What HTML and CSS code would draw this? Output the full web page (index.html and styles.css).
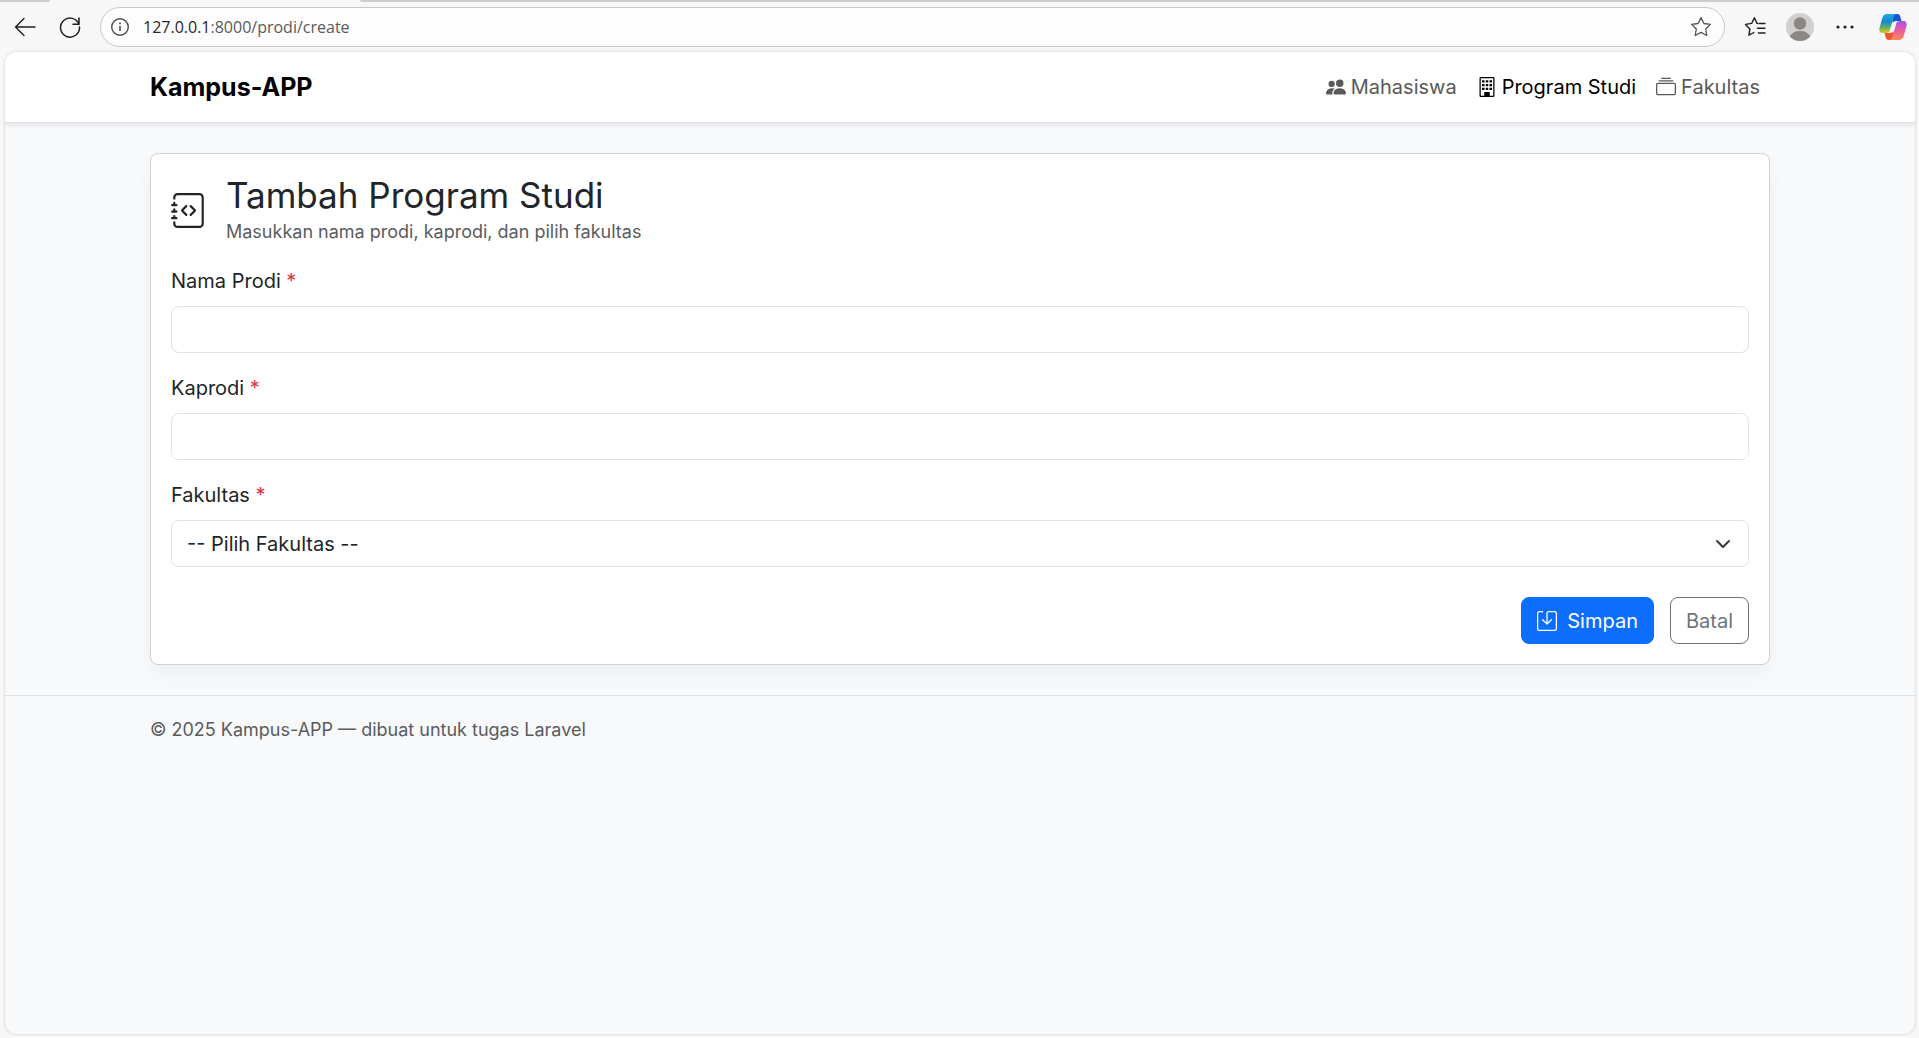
FILE: index.html
```html
<!DOCTYPE html>
<html lang="id">
<head>
<meta charset="utf-8">
<meta name="viewport" content="width=device-width, initial-scale=1">
<title>Tambah Program Studi</title>
<link rel="stylesheet" href="styles.css">
</head>
<body>
<header class="browser">
  <div class="tab-edge"><span class="tab-edge-left"></span><span class="tab-edge-right"></span></div>
  <div class="toolbar">
    <button class="tool" type="button" aria-label="Back">
      <svg width="24" height="24" viewBox="0 0 24 24" fill="none" stroke="#1f1f1f" stroke-width="1.4" stroke-linecap="round" stroke-linejoin="round"><path d="M22 12H2.500M11 3.500 2.500 12l8.500 8.500"/></svg>
    </button>
    <button class="tool" type="button" aria-label="Refresh">
      <svg width="24" height="24" viewBox="0 0 24 24" fill="none" stroke="#1f1f1f" stroke-width="1.500" stroke-linecap="round" stroke-linejoin="round"><path d="M21 9.500A9.500 9.500 0 1 0 21.500 12M21 3v6.200h-6"/></svg>
    </button>
    <div class="address">
      <svg width="20" height="20" viewBox="0 0 20 20" fill="none" stroke="#4a4a4a" stroke-width="1.400"><circle cx="10" cy="10" r="8.300"/><path d="M10 9v5" stroke-width="1.600"/><circle cx="10" cy="6.400" r="1" fill="#4a4a4a" stroke="none"/></svg>
      <span class="url"><span class="url-host">127.0.0.1</span>:8000/prodi/create</span>
      <svg class="star" width="22" height="22" viewBox="0 0 22 22" fill="none" stroke="#555" stroke-width="1.300" stroke-linejoin="round"><path d="M11 1.600l2.900 5.900 6.500.9-4.700 4.600 1.100 6.500-5.800-3.100-5.800 3.100 1.100-6.500L1.600 8.400l6.500-.9z"/></svg>
    </div>
    <button class="tool" type="button" aria-label="Favorites">
      <svg width="22" height="22" viewBox="0 0 22 22" fill="none" stroke="#1f1f1f" stroke-width="1.400" stroke-linecap="round" stroke-linejoin="round"><path d="M14 7.500l-1-.1L10.400 1.800 7.700 7.400l-6.200 1 4.400 4.500-1 6.300 5-2.700M15.500 7.500H21M13.500 12.200H21M14.500 17H21"/></svg>
    </button>
    <button class="tool" type="button" aria-label="Profile">
      <svg width="28" height="28" viewBox="0 0 28 28"><circle cx="14" cy="14" r="14" fill="#d2d0ce"/><circle cx="14" cy="10.500" r="6.200" fill="#8a8785"/><path d="M4 23.700C5.500 19.800 9 18 14 18s8.500 1.800 10 5.700A14 14 0 0 1 14 28 14 14 0 0 1 4 23.700z" fill="#8a8785"/></svg>
    </button>
    <button class="tool" type="button" aria-label="Settings and more">
      <svg width="18" height="6" viewBox="0 0 18 6" fill="#1f1f1f"><circle cx="2" cy="3" r="1.600"/><circle cx="9" cy="3" r="1.600"/><circle cx="16" cy="3" r="1.600"/></svg>
    </button>
    <button class="tool tool-copilot" type="button" aria-label="Copilot">
      <svg width="28" height="28" viewBox="0 0 28 28">
        <defs>
          <linearGradient id="cool" x1="0" y1="0" x2="0" y2="1"><stop offset="0" stop-color="#1ba8e8"/><stop offset=".4" stop-color="#1687d2"/><stop offset=".7" stop-color="#58b265"/><stop offset="1" stop-color="#e9c51c"/></linearGradient>
          <linearGradient id="warm" x1="0" y1="0" x2="0" y2="1"><stop offset="0" stop-color="#a457ec"/><stop offset=".5" stop-color="#ec5aa0"/><stop offset="1" stop-color="#fb8d52"/></linearGradient>
        </defs>
        <path d="M14 1h4.500c1.600 0 2.300 1 2.800 2.500L22.500 8h-4c-2.200 0-3.500.4-5 1.800z" fill="#1558cf"/>
        <path d="M14 27H9.500c-1.600 0-2.300-1-2.800-2.500L5.500 20h4c2.200 0 3.500-.4 5-1.800z" fill="#f4552e"/>
        <path d="M8 1h10c-1.800 0-2.700 1-3.200 2.700L10.800 17.200c-.5 1.800-1.500 2.800-3.500 2.800H3.600C.8 20 0 18 .5 15L3.300 5C4.100 2.200 5.500 1 8 1z" fill="url(#cool)"/>
        <path d="M20 27H10c1.800 0 2.700-1 3.200-2.700L17.200 10.800c.5-1.800 1.500-2.800 3.500-2.800h3.700c2.800 0 3.600 2 3.100 5l-2.800 10c-.8 2.800-2.200 4-4.700 4z" fill="url(#warm)"/>
      </svg>
    </button>
  </div>
</header>

<div class="page">
  <nav class="navbar">
    <div class="container navbar-inner">
      <a class="brand" href="#">Kampus-APP</a>
      <div class="nav-links">
        <a class="nav-link" href="#">
          <svg class="icon" viewBox="0 0 16 16"><path d="M7 14s-1 0-1-1 1-4 5-4 5 3 5 4-1 1-1 1zm4-6a3 3 0 1 0 0-6 3 3 0 0 0 0 6m-5.784 6A2.240 2.240 0 0 1 5 13c0-1.355.68-2.750 1.936-3.720A6.300 6.300 0 0 0 5 9c-4 0-5 3-5 4s1 1 1 1zM4.500 8a2.500 2.500 0 1 0 0-5 2.500 2.500 0 0 0 0 5"/></svg>
          Mahasiswa</a>
        <a class="nav-link active" href="#" aria-current="page">
          <svg class="icon" viewBox="0 0 16 16"><path d="M4 2.500h2v1.800H4zm3 0h2v1.800H7zm3 0h2v1.800h-2zM4 5.500h2v1.800H4zm3 0h2v1.800H7zm3 0h2v1.800h-2zM4 8.500h2v1.800H4zm3 0h2v1.800H7zm3 0h2v1.800h-2z"/><path d="M2 1a1 1 0 0 1 1-1h10a1 1 0 0 1 1 1v14a1 1 0 0 1-1 1H3a1 1 0 0 1-1-1zm11 0H3v14h3v-2.500a.5.5 0 0 1 .5-.5h3a.5.5 0 0 1 .5.5V15h3z"/><path d="M6 12h4v3.500H6z"/></svg>
          Program Studi</a>
        <a class="nav-link" href="#">
          <svg class="icon" viewBox="0 0 16 16"><path d="M2.500 3.500a.5.5 0 0 1 0-1h11a.5.5 0 0 1 0 1zm2-2a.5.5 0 0 1 0-1h7a.5.5 0 0 1 0 1zM0 13a1.500 1.500 0 0 0 1.500 1.500h13A1.500 1.500 0 0 0 16 13V6a1.500 1.500 0 0 0-1.500-1.500h-13A1.500 1.500 0 0 0 0 6zm1.500.5A.5.5 0 0 1 1 13V6a.5.5 0 0 1 .5-.5h13a.5.5 0 0 1 .5.5v7a.5.5 0 0 1-.5.5z"/></svg>
          Fakultas</a>
      </div>
    </div>
  </nav>

  <main class="container">
    <section class="card">
      <div class="card-head">
        <svg class="icon-lg" viewBox="0 0 16 16"><path d="M8.646 5.646a.5.5 0 0 1 .708 0l2 2a.5.5 0 0 1 0 .708l-2 2a.5.5 0 0 1-.708-.708L10.293 8 8.646 6.354a.5.5 0 0 1 0-.708m-1.292 0a.5.5 0 0 0-.708 0l-2 2a.5.5 0 0 0 0 .708l2 2a.5.5 0 0 0 .708-.708L5.707 8l1.647-1.646a.5.5 0 0 0 0-.708"/><path d="M3 0h10a2 2 0 0 1 2 2v12a2 2 0 0 1-2 2H3a2 2 0 0 1-2-2v-1h1v1a1 1 0 0 0 1 1h10a1 1 0 0 0 1-1V2a1 1 0 0 0-1-1H3a1 1 0 0 0-1 1v1H1V2a2 2 0 0 1 2-2"/><path d="M1 5v-.5a.5.5 0 0 1 1 0V5h.5a.5.5 0 0 1 0 1h-2a.5.5 0 0 1 0-1zm0 3v-.5a.5.5 0 0 1 1 0V8h.5a.5.5 0 0 1 0 1h-2a.5.5 0 0 1 0-1zm0 3v-.5a.5.5 0 0 1 1 0v.5h.5a.5.5 0 0 1 0 1h-2a.5.5 0 0 1 0-1z"/></svg>
        <div class="heading">
          <h1 class="title">Tambah Program Studi</h1>
          <p class="small">Masukkan nama prodi, kaprodi, dan pilih fakultas</p>
        </div>
      </div>
      <form class="form">
        <div class="field">
          <label for="nama">Nama Prodi <span class="required">*</span></label>
          <input class="control" id="nama" type="text">
        </div>
        <div class="field">
          <label for="kaprodi">Kaprodi <span class="required">*</span></label>
          <input class="control" id="kaprodi" type="text">
        </div>
        <div class="field">
          <label for="fakultas">Fakultas <span class="required">*</span></label>
          <select class="control select" id="fakultas"><option>-- Pilih Fakultas --</option></select>
        </div>
        <div class="actions">
          <button class="btn btn-primary" type="submit">
            <svg class="icon" viewBox="0 0 16 16"><path d="M2 1a1 1 0 0 0-1 1v12a1 1 0 0 0 1 1h12a1 1 0 0 0 1-1V2a1 1 0 0 0-1-1H9.500a1 1 0 0 0-1 1v7.293l2.646-2.647a.5.5 0 0 1 .708.708l-3.500 3.500a.5.5 0 0 1-.708 0l-3.500-3.500a.5.5 0 1 1 .708-.708L7.500 9.293V2a2 2 0 0 1 2-2H14a2 2 0 0 1 2 2v12a2 2 0 0 1-2 2H2a2 2 0 0 1-2-2V2a2 2 0 0 1 2-2h2.500a.5.5 0 0 1 0 1z"/></svg>
            Simpan</button>
          <a class="btn btn-outline" href="#">Batal</a>
        </div>
      </form>
    </section>
  </main>

  <footer class="footer">
    <div class="container"><p class="small">© 2025 Kampus-APP — dibuat untuk tugas Laravel</p></div>
  </footer>
</div>
</body>
</html>
```
FILE: styles.css
```css
* { box-sizing: border-box; }

body {
  display: flex;
  flex-direction: column;
  min-height: 100vh;
  margin: 0;
  padding: 0 4px 4px 5px;
  background: #f7f7f7;
  color: #212529;
  font: 20px/30px Inter, "Liberation Sans", sans-serif;
}

h1, p { margin: 0; font-weight: 400; }
a { text-decoration: none; }
svg { flex: none; display: block; }

/* Browser toolbar */
.browser { margin: 0 -4px 0 -5px; padding-bottom: 1px; }
.tab-edge { display: flex; justify-content: space-between; height: 2px; }
.tab-edge-left { width: 50px; background: #cdcdcd; border-bottom-right-radius: 4px; }
.tab-edge-right { width: calc(100% - 360px); background: #cdcdcd; border-bottom-left-radius: 4px; }
.toolbar { display: flex; align-items: center; height: 49px; padding: 0 4px 0 2px; }
.tool {
  display: flex;
  align-items: center;
  justify-content: center;
  flex: none;
  width: 45px;
  height: 40px;
  padding: 0;
  border: 0;
  background: none;
}
.tool-copilot { margin-left: 3px; }
.address {
  display: flex;
  align-items: center;
  flex: 1;
  height: 40px;
  margin: 0 7px 0 8px;
  padding: 0 12px 0 9px;
  border: 1px solid #c8c8c8;
  border-radius: 20px;
  background: #fdfdfd;
}
.url { margin-left: 13px; font: 16px/24px "Open Sans", "Noto Sans", sans-serif; color: #5a5a5a; }
.url-host { color: #262626; }
.star { margin-left: auto; }

/* Web page */
.page {
  flex: 1;
  overflow: hidden;
  border-radius: 12px;
  background: #f8f9fa;
  box-shadow: 0 0 2px 1px #dddfe0;
}
.container { max-width: 1650px; margin: 0 auto; padding: 0 15px; }

.navbar {
  padding: 10px 0;
  border-bottom: 1px solid #dee2e6;
  background: #fff;
  box-shadow: 0 3px 5px rgba(0, 0, 0, .08);
}
.navbar-inner { display: flex; align-items: center; justify-content: space-between; }
.brand { color: #000; font-size: 25px; font-weight: 700; }
.nav-links { display: flex; }
.nav-link { display: flex; align-items: center; gap: 5px; padding: 10px; color: #595959; }
.nav-link.active { color: #000; }
.icon { width: 20px; height: 20px; fill: currentColor; }

.card {
  margin: 30px 0;
  padding: 20px;
  border: 1px solid #d0d2d3;
  border-radius: 8px;
  background: #fff;
  box-shadow: 0 10px 20px rgba(0, 0, 0, .04);
}
.card-head { display: flex; align-items: center; gap: 20px; margin-bottom: 20px; }
.icon-lg { width: 35px; height: 35px; fill: currentColor; }
.heading { display: flex; flex-direction: column; gap: 2px; }
.title { font-size: 35px; line-height: 42px; }
.small { color: #595c5f; font-size: 18px; line-height: 28px; }

.field { display: flex; flex-direction: column; gap: 10px; margin-bottom: 20px; }
.required { color: #dc3545; }
.control {
  width: 100%;
  height: 47px;
  padding: 0 15px;
  border: 1px solid #dee2e6;
  border-radius: 8px;
  background: #fff;
  color: inherit;
  font: inherit;
}
.select {
  appearance: none;
  background: #fff url("data:image/svg+xml,%3Csvg xmlns='http://www.w3.org/2000/svg' viewBox='0 0 16 16'%3E%3Cpath fill='none' stroke='%23343a40' stroke-linecap='round' stroke-linejoin='round' stroke-width='2' d='m2 5 6 6 6-6'/%3E%3C/svg%3E") no-repeat right 17px center / 16px 16px;
}
.actions { display: flex; justify-content: flex-end; gap: 16px; padding-top: 10px; }
.btn {
  display: flex;
  align-items: center;
  gap: 10px;
  height: 47px;
  padding: 0 15px;
  border: 1px solid #0d6efd;
  border-radius: 8px;
  font: inherit;
}
.btn-primary { background: #0d6efd; color: #fff; }
.btn-outline { border-color: #6c757d; color: #6c757d; }

.footer { padding: 20px 0; border-top: 1px solid #dee2e6; }
```
